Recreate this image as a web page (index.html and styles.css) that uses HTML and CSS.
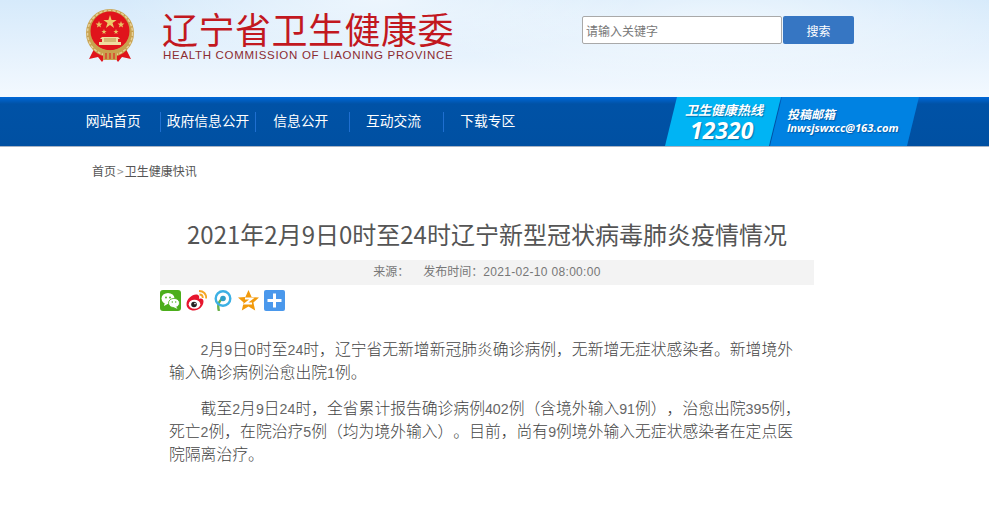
FILE: index.html
```html
<!DOCTYPE html>
<html>
<head>
    <title>辽宁省卫生健康委</title>
    <link rel="stylesheet" href="styles.css">
</head>
<body>
    <!-- 顶部 logo 和搜索 -->
    <div class="header">
        <svg class="emblem" viewBox="0 0 50 53">
            <path d="M10 38 L4 50 L13 48 L17 53 L22 46 L28 46 L33 53 L37 48 L46 50 L40 38 Z" fill="#e0141c"/>
            <circle cx="25" cy="24" r="24" fill="#c9a24e"/>
            <circle cx="25" cy="24" r="22.500" fill="none" stroke="#e6d09a" stroke-width="1.500" stroke-dasharray="3 1.500"/>
            <circle cx="25" cy="22" r="19.500" fill="#e0141c"/>
            <polygon points="25,6 26.600,11 31.600,11 27.500,14 29.100,19 25,16 20.900,19 22.500,14 18.400,11 23.400,11" fill="#eccb6a"/>
            <polygon points="14,12 14.900,14.600 17.400,14.600 15.400,16.200 16.100,18.600 14,17.200 11.900,18.600 12.600,16.200 10.600,14.600 13.100,14.600" fill="#e8c465"/>
            <polygon points="36,12 36.900,14.600 39.400,14.600 37.400,16.200 38.100,18.600 36,17.200 33.900,18.600 34.600,16.200 32.600,14.600 35.100,14.600" fill="#e8c465"/>
            <polygon points="19,20 19.700,22 21.600,22 20,23.200 20.600,25 19,24 17.400,25 18,23.200 16.400,22 18.300,22" fill="#e8c465"/>
            <polygon points="31,20 31.700,22 33.600,22 32,23.200 32.600,25 31,24 29.400,25 30,23.200 28.400,22 30.300,22" fill="#e8c465"/>
            <path d="M17 28 H33 L35 30 H33 V33 H36 V36 H14 V33 H17 V30 H15 Z" fill="#f0dca0"/>
            <path d="M19 30 H31 M19 32 H31" stroke="#a8741e" stroke-width=".7"/>
            <path d="M8 35 Q14 43 25 43 Q36 43 42 35" fill="none" stroke="#c9a24e" stroke-width="3.500"/>
            <rect x="18" y="43" width="14" height="8" fill="#c9a24e"/>
            <path d="M21 44 V50 M25 44 V50 M29 44 V50" stroke="#e0141c" stroke-width="1"/>
        </svg>
        <div class="site-name">
            <div class="site-cn">辽宁省卫生健康委</div>
            <div class="site-en">HEALTH COMMISSION OF LIAONING PROVINCE</div>
        </div>
        <form class="search">
            <input class="search-input" type="text" placeholder="请输入关键字">
            <button class="search-btn" type="button">搜索</button>
        </form>
    </div>

    <!-- 导航 -->
    <div class="nav">
        <ul class="nav-list">
            <li>网站首页</li>
            <li>政府信息公开</li>
            <li>信息公开</li>
            <li>互动交流</li>
            <li>下载专区</li>
        </ul>
        <div class="contact">
            <div class="hotline">
                <div class="hotline-title">卫生健康热线</div>
                <div class="hotline-num">12320</div>
            </div>
            <div class="mailbox">
                <div class="mail-title">投稿邮箱</div>
                <div class="mail-addr">lnwsjswxcc@163.com</div>
            </div>
        </div>
    </div>

    <div class="crumb">首页<span class="crumb-sep">&gt;</span>卫生健康快讯</div>

    <!-- 正文 -->
    <div class="article">
        <h1 class="title">2021年2月9日0时至24时辽宁新型冠状病毒肺炎疫情情况</h1>
        <div class="meta">
            <span>来源：</span>
            <span>发布时间：<span class="meta-date">2021-02-10 08:00:00</span></span>
        </div>
        <div class="share">
            <svg class="share-icon" viewBox="0 0 21 21">
                <rect width="21" height="21" rx="3" fill="#4cae1c"/>
                <ellipse cx="8" cy="8.500" rx="6.500" ry="5.500" fill="#fff"/>
                <path d="M5 12 L4 16 L8.500 13.500 Z" fill="#fff"/>
                <ellipse cx="14" cy="13" rx="5.500" ry="4.600" fill="#fff" stroke="#4cae1c" stroke-width=".8"/>
                <path d="M16 16.500 L17.500 19 L13.500 17 Z" fill="#fff"/>
                <circle cx="6" cy="7.500" r=".9" fill="#4cae1c"/>
                <circle cx="10" cy="7.500" r=".9" fill="#4cae1c"/>
                <circle cx="12.300" cy="12" r=".7" fill="#4cae1c"/>
                <circle cx="15.700" cy="12" r=".7" fill="#4cae1c"/>
            </svg>
            <svg class="share-icon" viewBox="0 0 21 21">
                <path d="M0.500 14 C0.500 9 6 4.500 10 4.500 C13.500 4.500 13.500 7 13 9 C15.500 8 17.500 9 17.500 11.500 C17.500 16.500 12.500 20.500 8 20.500 C3.500 20.500 0.500 18 0.500 14 Z" fill="#e6162d"/>
                <ellipse cx="8.500" cy="14.300" rx="5.800" ry="4.500" fill="#fff"/>
                <circle cx="8" cy="14.500" r="2.800" fill="#222"/>
                <circle cx="9" cy="13.600" r=".8" fill="#fff"/>
                <path d="M13 1 C17.500 1 20.300 4 20.300 8.500" fill="none" stroke="#f5a623" stroke-width="2"/>
                <path d="M13.500 4.500 C15.500 4.500 16.800 6 16.800 8" fill="none" stroke="#f5a623" stroke-width="1.800"/>
            </svg>
            <svg class="share-icon" viewBox="0 0 21 21">
                <path d="M7 21 C5.500 16 6 12 10 9" fill="none" stroke="#6ab04c" stroke-width="2.400"/>
                <circle cx="11" cy="8.500" r="7.300" fill="none" stroke="#3cb0e4" stroke-width="2.400"/>
                <circle cx="11" cy="8.500" r="2.800" fill="#2f9fc8"/>
            </svg>
            <svg class="share-icon" viewBox="0 0 21 21">
                <polygon points="10.500,0 13.600,7 21,7.600 15.400,12.600 17.200,20.500 10.500,16.600 3.800,20.500 5.600,12.600 0,7.600 7.400,7" fill="#f29a0c"/>
                <path d="M7 8.500 H14 L7.500 13.500 H14" fill="none" stroke="#fff" stroke-width="2"/>
            </svg>
            <svg class="share-icon" viewBox="0 0 21 21">
                <rect width="21" height="21" rx="2" fill="#4a98ec"/>
                <path d="M10.500 3.500 V17.500 M3.500 10.500 H17.500" stroke="#fff" stroke-width="3"/>
            </svg>
        </div>
        <div class="content">
            <p><span class="num">2</span>月<span class="num">9</span>日<span class="num">0</span>时至<span class="num">24</span>时，辽宁省无新增新冠肺炎确诊病例，无新增无症状感染者。新增境外<br>输入确诊病例治愈出院<span class="num">1</span>例。</p>
            <p>截至<span class="num">2</span>月<span class="num">9</span>日<span class="num">24</span>时，全省累计报告确诊病例<span class="num">402</span>例（含境外输入<span class="num">91</span>例），治愈出院<span class="num">395</span>例，<br>死亡<span class="num">2</span>例，在院治疗<span class="num">5</span>例（均为境外输入）。目前，尚有<span class="num">9</span>例境外输入无症状感染者在定点医<br>院隔离治疗。</p>
        </div>
    </div>
</body>
</html>
```

FILE: styles.css
```css
* {
    box-sizing: border-box;
}
body {
    margin: 0;
    background: #fff;
    font-family: "Liberation Sans", "Noto Sans CJK SC", sans-serif;
    color: #444;
}

/* 顶部 */
.header {
    display: flex;
    height: 97px;
    padding-left: 85px;
    background:
        radial-gradient(ellipse 260px 60px at 380px 0, rgba(255,255,255,.55), rgba(255,255,255,0)),
        radial-gradient(ellipse 300px 70px at 720px 20px, rgba(255,255,255,.5), rgba(255,255,255,0)),
        linear-gradient(180deg, #d6eafb 0%, #e6f2fd 55%, #f3f9ff 100%);
}
.emblem {
    width: 50px;
    height: 53px;
    margin-top: 9px;
    flex: none;
    filter: blur(.4px);
}
.site-name {
    width: 292px;
    margin-left: 27px;
    padding-top: 8px;
}
.site-cn {
    font-family: "Noto Sans CJK SC", sans-serif;
    font-size: 36px;
    line-height: 40px;
    letter-spacing: .5px;
    color: #c2181f;
    white-space: nowrap;
}
.site-en {
    margin-left: 1px;
    font-size: 11.500px;
    line-height: 14px;
    letter-spacing: .7px;
    color: #8b2b30;
    white-space: nowrap;
}
.search {
    display: flex;
    margin: 16px 0 0 128px;
    height: 28px;
}
.search-input {
    width: 200px;
    height: 28px;
    padding: 0 3px;
    border: 1px solid #a9a9a9;
    border-radius: 2px;
    background: #fff;
    font-family: "Noto Sans CJK SC", sans-serif;
    font-size: 12px;
}
.search-input::placeholder {
    color: #777;
}
.search-btn {
    width: 71px;
    height: 28px;
    margin-left: 1px;
    border: 0;
    border-radius: 2px;
    background: #3676c3;
    color: #fff;
    font-family: "Noto Sans CJK SC", sans-serif;
    font-size: 12px;
}

/* 导航 */
.nav {
    display: flex;
    height: 50px;
    padding-left: 66px;
    border-bottom: 1px solid #a9b4c4;
    background: linear-gradient(180deg, #0068d8 0, #0052a6 7px, #0050a2 100%);
}
.nav-list {
    display: flex;
    align-items: center;
    margin: 0;
    padding: 0;
    list-style: none;
}
.nav-list li {
    width: 94.300px;
    height: 20px;
    font-size: 13.750px;
    line-height: 17px;
    text-align: center;
    color: #fff;
    font-family: "Noto Sans CJK SC", sans-serif;
}
.nav-list li + li {
    border-left: 1px solid #1f6fd0;
}
.nav-list li:nth-child(3) {
    padding-right: 3px;
}
.nav-list li:nth-child(n+4) {
    padding-right: 6px;
}
.contact {
    display: flex;
    margin-left: 127.500px;
    height: 49px;
    color: #fff;
    font-style: italic;
    font-weight: bold;
    text-shadow: 1px 1px 1px rgba(0,50,110,.5);
}
.hotline {
    width: 116px;
    padding-left: 20px;
    background: #00b4f4;
    clip-path: polygon(12px 0, 100% 0, 104px 100%, 0 100%);
}
.hotline-title {
    font-family: "Noto Sans CJK SC", sans-serif;
    font-size: 13px;
    line-height: 18px;
    margin-top: 4px;
}
.hotline-num {
    font-family: "Open Sans", sans-serif;
    font-size: 23px;
    line-height: 22px;
    margin-left: 5px;
}
.mailbox {
    width: 149px;
    margin-left: -11px;
    padding-left: 17px;
    background: #0082e2;
    clip-path: polygon(12px 0, 100% 0, 137px 100%, 0 100%);
}
.mail-title {
    font-family: "Noto Sans CJK SC", sans-serif;
    font-size: 12px;
    line-height: 16px;
    margin-top: 9px;
}
.mail-addr {
    font-family: "Open Sans", sans-serif;
    font-size: 11.200px;
    line-height: 14px;
    margin-top: -1px;
}

.crumb {
    padding: 16px 0 0 92px;
    font-family: "Noto Sans CJK SC", sans-serif;
    font-size: 12px;
    line-height: 16px;
    color: #555;
}
.crumb-sep {
    margin: 0 1px;
    color: #999;
}

/* 正文 */
.article {
    width: 654px;
    margin-left: 160px;
}
.title {
    margin: 37px 0 0;
    font-family: "Noto Sans CJK SC", sans-serif;
    font-size: 24px;
    font-weight: normal;
    line-height: 36px;
    text-align: center;
    color: #555;
}
.meta {
    display: flex;
    justify-content: center;
    gap: 14px;
    height: 25px;
    margin-top: 8px;
    background: #f3f3f3;
    font-size: 12px;
    line-height: 25px;
    color: #777;
}
.meta-date {
    letter-spacing: .32px;
}
.share {
    display: flex;
    gap: 5px;
    margin-top: 5px;
}
.share-icon {
    width: 21px;
    height: 21px;
}
.content {
    padding: 0 9px;
    margin-top: 27px;
    font-size: 15.800px;
    font-weight: 300;
    line-height: 23px;
    color: #444;
    text-spacing-trim: space-all;
}
.content p {
    margin: 0 0 13px;
    text-indent: 31.600px;
}
.num {
    font-size: 14.200px;
    line-height: 1;
    color: #666;
}
```
